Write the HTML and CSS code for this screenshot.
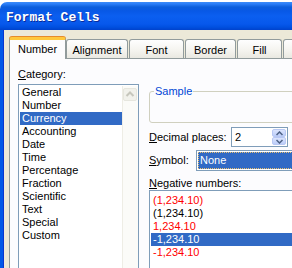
FILE: index.html
```html
<!DOCTYPE html>
<html lang="en">
<head>
    <meta charset="UTF-8">
    <title>Format Cells</title>
    <link rel="stylesheet" href="styles.css">
</head>
<body>
    <div class="window">
        <div class="titlebar"><span class="title">Format Cells</span></div>
        <div class="client">
            <div class="tabs">
                <div class="tab active tab-number">Number</div>
                <div class="tab tab-alignment">Alignment</div>
                <div class="tab tab-font">Font</div>
                <div class="tab tab-border">Border</div>
                <div class="tab tab-fill">Fill</div>
                <div class="tab tab-more"></div>
            </div>
            <div class="page">
                <div class="col-left">
                    <div class="label"><u>C</u>ategory:</div>
                    <div class="listbox category">
                        <ul class="items">
                            <li>General</li>
                            <li>Number</li>
                            <li class="selected">Currency</li>
                            <li>Accounting</li>
                            <li>Date</li>
                            <li>Time</li>
                            <li>Percentage</li>
                            <li>Fraction</li>
                            <li>Scientific</li>
                            <li>Text</li>
                            <li>Special</li>
                            <li>Custom</li>
                        </ul>
                        <div class="scrollbar">
                            <div class="scroll-btn">
                                <svg width="12" height="11" viewBox="0 0 12 11"><path d="M2.5 7 L6 3.5 L9.5 7" fill="none" stroke="#c6c6bc" stroke-width="2"/></svg>
                            </div>
                        </div>
                    </div>
                </div>
                <div class="col-right">
                    <fieldset class="sample">
                        <legend>Sample</legend>
                        <div class="sample-body"></div>
                    </fieldset>
                    <div class="row decimals">
                        <span class="row-label"><u>D</u>ecimal places:</span>
                        <div class="spin">
                            <span class="spin-value">2</span>
                            <div class="spin-btns">
                                <div class="spin-btn"><svg width="7" height="5" viewBox="0 0 7 5"><path d="M0.5 4 L3.5 1 L6.5 4" fill="none" stroke="#4d6185" stroke-width="1.5"/></svg></div>
                                <div class="spin-btn"><svg width="7" height="5" viewBox="0 0 7 5"><path d="M0.5 1 L3.5 4 L6.5 1" fill="none" stroke="#4d6185" stroke-width="1.5"/></svg></div>
                            </div>
                        </div>
                    </div>
                    <div class="row symbol">
                        <span class="row-label"><u>S</u>ymbol:</span>
                        <div class="combo"><span class="combo-sel">None</span></div>
                    </div>
                    <div class="label neg-label"><u>N</u>egative numbers:</div>
                    <div class="listbox negative">
                        <ul class="items">
                            <li class="red">(1,234.10)</li>
                            <li>(1,234.10)</li>
                            <li class="red">1,234.10</li>
                            <li class="selected">-1,234.10</li>
                            <li class="red">-1,234.10</li>
                        </ul>
                    </div>
                </div>
            </div>
        </div>
    </div>
</body>
</html>
```

FILE: styles.css
```css
* {
    box-sizing: border-box;
}
body {
    margin: 0;
    width: 292px;
    height: 268px;
    overflow: hidden;
    background: #fff;
    font-family: "Liberation Sans", Arial, sans-serif;
    font-size: 11px;
    line-height: 13px;
    color: #000;
}
.window {
    margin-top: 2px;
    width: 420px;
}
.titlebar {
    height: 28px;
    padding: 3px 0 0 6px;
    border-radius: 7px 0 0 0;
    background: linear-gradient(to bottom, #3d8cf7 0, #2b7ef8 2px, #0d5fdc 5px, #0858e6 9px, #0b5ff0 14px, #0758ec 22px, #0050e0 25px, #0042cc 28px);
}
.title {
    font-family: "Liberation Mono", "Courier New", monospace;
    font-weight: bold;
    font-size: 13px;
    line-height: 25px;
    color: #fff;
    text-shadow: 1px 1px 0 #0a2a9a;
}
.client {
    border-left: 3px solid #0058e8;
    box-shadow: inset 1px 0 0 #0836d0;
    background: #ece9d8;
    padding: 7px 0 0 6px;
}

/* tabs */
.tabs {
    display: flex;
    align-items: flex-end;
    height: 21px;
    position: relative;
    z-index: 1;
}
.tab {
    height: 19px;
    padding-top: 4px;
    border: 1px solid #919b9c;
    border-bottom: none;
    border-radius: 3px 3px 0 0;
    background: linear-gradient(to bottom, #fefefe, #f4f3ee 60%, #e9e8e1);
    text-align: center;
    white-space: nowrap;
    overflow: hidden;
}
.tab.active {
    height: 22px;
    margin-bottom: -1px;
    padding-top: 3px;
    border-top: 3px solid #ffc83c;
    box-shadow: 0 -1px 0 #e68b2c;
    background: #fcfcfe;
}
.tab-number { width: 57px; }
.tab-alignment { width: 62px; }
.tab-font { width: 55px; margin-left: 1px; }
.tab-border { width: 51px; margin-left: 1px; }
.tab-fill { width: 45px; margin-left: 1px; }
.tab-more { width: 70px; margin-left: 1px; }

/* page */
.page {
    display: flex;
    gap: 10px;
    height: 240px;
    padding: 9px 0 0 8px;
    border-top: 1px solid #919b9c;
    border-left: 1px solid #919b9c;
    background: #fcfcfe;
}
.col-left {
    width: 121px;
    flex: none;
}
.label {
    height: 13px;
}
u {
    text-underline-offset: 1px;
}
.listbox {
    border: 1px solid #7f9db9;
    background: #fff;
}
.listbox .items {
    list-style: none;
    margin: 0;
    padding: 0;
}
.listbox li {
    height: 13px;
    padding-left: 2px;
    white-space: nowrap;
}
.listbox li.selected {
    background: #316ac5;
    color: #fff;
}
.category {
    margin-top: 3px;
    display: flex;
    height: 200px;
    padding: 1px 0 0 1px;
}
.category .items {
    width: 102px;
}
.scrollbar {
    width: 16px;
    border-left: 1px solid #eeede5;
    background: #fbfbf8;
}
.scroll-btn {
    width: 14px;
    height: 13px;
    margin-top: 2px;
    border: 1px solid #e6e6de;
    border-radius: 2px;
    background: #f1f1eb;
    display: flex;
    align-items: center;
    justify-content: center;
}

/* right column */
.col-right {
    width: 220px;
    flex: none;
    margin-top: 17px;
}
.sample {
    margin: 0;
    padding: 0;
    border: 1px solid #d0d0bf;
    border-radius: 3px;
}
.sample legend {
    margin-left: 4px;
    padding: 0 1px;
    color: #0046d5;
}
.sample-body {
    height: 24px;
}
.row {
    display: flex;
    align-items: center;
}
.decimals {
    margin-top: 4px;
    height: 20px;
}
.decimals .row-label {
    width: 82px;
    flex: none;
}
.spin {
    width: 57px;
    height: 20px;
    border: 1px solid #7f9db9;
    background: #fff;
    display: flex;
    align-items: center;
    justify-content: space-between;
    padding: 1px;
}
.spin-value {
    padding-left: 2px;
}
.spin-btns {
    display: flex;
    flex-direction: column;
    width: 14px;
    height: 16px;
}
.spin-btn {
    flex: 1;
    display: flex;
    align-items: center;
    justify-content: center;
    border: 1px solid #b8c8f4;
    border-radius: 2px;
    background: linear-gradient(to bottom, #dbe4fd, #bccdf9);
}
.symbol {
    margin-top: 3px;
    height: 21px;
}
.symbol .row-label {
    width: 47px;
    flex: none;
}
.combo {
    flex: 1;
    height: 21px;
    border: 1px solid #7f9db9;
    background: #fff;
    padding: 1px;
}
.combo-sel {
    display: block;
    height: 17px;
    line-height: 17px;
    padding-left: 2px;
    background: #316ac5;
    color: #fff;
    outline: 1px dotted #e8c070;
    outline-offset: -1px;
}
.neg-label {
    margin-top: 6px;
}
.negative {
    height: 100px;
    padding: 3px 0 0 1px;
}
.negative li.red {
    color: #f00;
}
```
